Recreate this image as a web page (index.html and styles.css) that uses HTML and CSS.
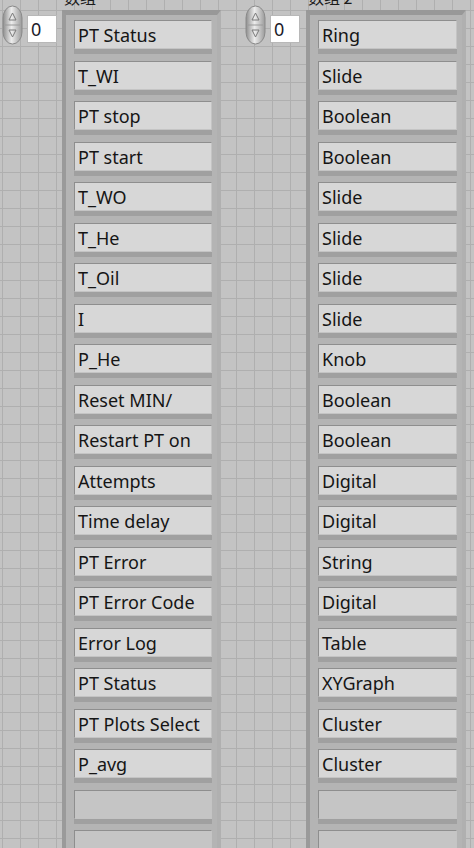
FILE: index.html
```html
<!DOCTYPE html>
<html>
<head>
<meta charset="utf-8">
<link rel="stylesheet" href="styles.css">
</head>
<body>
<div class="canvas">
  <div class="arr arr-left">
    <div class="ctrl">
      <svg class="spin" width="21" height="40" viewBox="0 0 21 40">
        <defs>
          <linearGradient id="sg1" x1="0" y1="0" x2="1" y2="0">
            <stop offset="0" stop-color="#8e8e8e"/>
            <stop offset="0.45" stop-color="#ececec"/>
            <stop offset="1" stop-color="#9a9a9a"/>
          </linearGradient>
        </defs>
        <rect x="1" y="1" width="19" height="38" rx="9.5" ry="12" fill="url(#sg1)" stroke="#8a8a8a" stroke-width="1"/>
        <line x1="3" y1="20" x2="18" y2="20" stroke="#9a9a9a" stroke-width="1"/>
        <path d="M10.5 8 L7 15 L14 15 Z" fill="none" stroke="#7a7a7a" stroke-width="1"/>
        <path d="M10.5 32 L7 25 L14 25 Z" fill="none" stroke="#7a7a7a" stroke-width="1"/>
      </svg>
      <div class="idx">0</div>
    </div>
    <div class="col">
      <div class="label">数组</div>
      <div class="frame">
        <div class="cell"><div class="box">PT Status</div></div>
        <div class="cell"><div class="box">T_WI</div></div>
        <div class="cell"><div class="box">PT stop</div></div>
        <div class="cell"><div class="box">PT start</div></div>
        <div class="cell"><div class="box">T_WO</div></div>
        <div class="cell"><div class="box">T_He</div></div>
        <div class="cell"><div class="box">T_Oil</div></div>
        <div class="cell"><div class="box">I</div></div>
        <div class="cell"><div class="box">P_He</div></div>
        <div class="cell"><div class="box">Reset MIN/</div></div>
        <div class="cell"><div class="box">Restart PT on</div></div>
        <div class="cell"><div class="box">Attempts</div></div>
        <div class="cell"><div class="box">Time delay</div></div>
        <div class="cell"><div class="box">PT Error</div></div>
        <div class="cell"><div class="box">PT Error Code</div></div>
        <div class="cell"><div class="box">Error Log</div></div>
        <div class="cell"><div class="box">PT Status</div></div>
        <div class="cell"><div class="box">PT Plots Select</div></div>
        <div class="cell"><div class="box">P_avg</div></div>
        <div class="cell"><div class="box empty"></div></div>
        <div class="cell"><div class="box empty"></div></div>
      </div>
    </div>
  </div>

  <div class="arr arr-right">
    <div class="ctrl">
      <svg class="spin" width="21" height="40" viewBox="0 0 21 40">
        <defs>
          <linearGradient id="sg2" x1="0" y1="0" x2="1" y2="0">
            <stop offset="0" stop-color="#8e8e8e"/>
            <stop offset="0.45" stop-color="#ececec"/>
            <stop offset="1" stop-color="#9a9a9a"/>
          </linearGradient>
        </defs>
        <rect x="1" y="1" width="19" height="38" rx="9.5" ry="12" fill="url(#sg2)" stroke="#8a8a8a" stroke-width="1"/>
        <line x1="3" y1="20" x2="18" y2="20" stroke="#9a9a9a" stroke-width="1"/>
        <path d="M10.5 8 L7 15 L14 15 Z" fill="none" stroke="#7a7a7a" stroke-width="1"/>
        <path d="M10.5 32 L7 25 L14 25 Z" fill="none" stroke="#7a7a7a" stroke-width="1"/>
      </svg>
      <div class="idx">0</div>
    </div>
    <div class="col">
      <div class="label">数组 2</div>
      <div class="frame">
        <div class="cell"><div class="box">Ring</div></div>
        <div class="cell"><div class="box">Slide</div></div>
        <div class="cell"><div class="box">Boolean</div></div>
        <div class="cell"><div class="box">Boolean</div></div>
        <div class="cell"><div class="box">Slide</div></div>
        <div class="cell"><div class="box">Slide</div></div>
        <div class="cell"><div class="box">Slide</div></div>
        <div class="cell"><div class="box">Slide</div></div>
        <div class="cell"><div class="box">Knob</div></div>
        <div class="cell"><div class="box">Boolean</div></div>
        <div class="cell"><div class="box">Boolean</div></div>
        <div class="cell"><div class="box">Digital</div></div>
        <div class="cell"><div class="box">Digital</div></div>
        <div class="cell"><div class="box">String</div></div>
        <div class="cell"><div class="box">Digital</div></div>
        <div class="cell"><div class="box">Table</div></div>
        <div class="cell"><div class="box">XYGraph</div></div>
        <div class="cell"><div class="box">Cluster</div></div>
        <div class="cell"><div class="box">Cluster</div></div>
        <div class="cell"><div class="box empty"></div></div>
        <div class="cell"><div class="box empty"></div></div>
      </div>
    </div>
  </div>
</div>
</body>
</html>
```

FILE: styles.css
```css
html, body {
  margin: 0;
  padding: 0;
  height: 100%;
  overflow: hidden;
}
body {
  background-color: #c3c3c3;
  background-image:
    linear-gradient(to right, #afafaf 1px, transparent 1px),
    linear-gradient(to bottom, #afafaf 1px, transparent 1px);
  background-size: 18px 18px;
  background-position: 2px 10px;
  font-family: "Noto Sans", "Open Sans", "Noto Sans CJK SC", sans-serif;
}
.canvas {
  display: flex;
  padding-left: 2px;
}
.arr {
  display: flex;
  align-items: flex-start;
}
.arr-right {
  margin-left: 24px;
}
.ctrl {
  display: flex;
  align-items: flex-start;
  gap: 4px;
  padding-top: 5px;
}
.spin {
  display: block;
}
.idx {
  margin-top: 10px;
  width: 30px;
  height: 28px;
  box-sizing: border-box;
  background: #ffffff;
  border: 1px solid #b8b8b8;
  font-size: 18px;
  line-height: 27px;
  padding-left: 3px;
  color: #1b1b2a;
}
.col {
  margin-left: 5px;
  display: flex;
  flex-direction: column;
}
.arr-right .col {
  margin-left: 6px;
}
.label {
  font-family: "Noto Sans CJK SC", sans-serif;
  font-size: 16px;
  line-height: 20px;
  height: 20px;
  margin-top: -13px;
  margin-bottom: 3px;
  padding-left: 2px;
  color: #1b1b1b;
}
.frame {
  width: 159px;
  box-sizing: border-box;
  background: #b4b4b4;
  border-left: 4px solid #9a9a9a;
  border-right: 4px solid #b0b0b0;
  border-top: 5px solid #989898;
  padding-top: 5px;
}
.arr-right .frame {
  width: 160px;
}
.cell {
  height: 40.5px;
  box-sizing: border-box;
  padding: 0 5px 0 8px;
}
.box {
  height: 29px;
  box-sizing: border-box;
  background: #d7d7d7;
  border-top: 1px solid #8e8e8e;
  border-left: 1px solid #8e8e8e;
  border-bottom: 1px solid #c4c4c4;
  border-right: 1px solid #c4c4c4;
  box-shadow: 0 5px 0 #a0a0a0;
  font-size: 18px;
  line-height: 29px;
  padding-left: 3px;
  color: #151515;
  white-space: nowrap;
  overflow: hidden;
}
.box.empty {
  background: #c5c5c5;
}
```
